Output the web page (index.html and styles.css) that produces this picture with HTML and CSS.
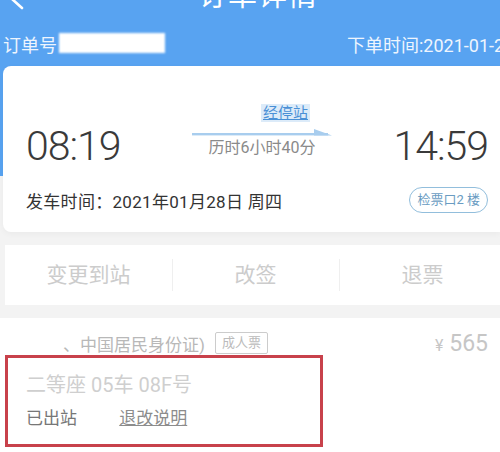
FILE: index.html
```html
<!DOCTYPE html>
<html lang="zh-CN">
<head>
    <meta charset="UTF-8">
    <meta name="viewport" content="width=device-width, initial-scale=1.0">
    <title>订单详情</title>
    <link rel="stylesheet" href="styles.css">
</head>
<body>
    <div class="topbar">
        <svg class="back" width="40" height="22" viewBox="0 0 40 22">
            <path d="M22 8 L12 -1" stroke="#ffffff" stroke-width="2.6" stroke-linecap="round" fill="none"/>
        </svg>
        <h1 class="title">订单详情</h1>
        <span></span>
    </div>
    <div class="order-row">
        <span class="order-no">订单号</span>
        <span class="mask"></span>
        <span class="order-time">下单时间:2021-01-28 07:42</span>
    </div>

    <div class="card trip">
        <div class="times">
            <div class="time">08:19</div>
            <div class="route">
                <a class="stops">经停站</a>
                <svg class="arrow" width="140" height="8" viewBox="0 0 140 8">
                    <rect x="0" y="5" width="136" height="2.4" fill="#a8cdee"/>
                    <polygon points="122,1 140,7.4 122,7.4" fill="#a8cdee"/>
                </svg>
                <div class="duration">历时6小时40分</div>
            </div>
            <div class="time">14:59</div>
        </div>
        <div class="depart">
            <span>发车时间：2021年01月28日 周四</span>
            <span class="gate">检票口2 楼</span>
        </div>
    </div>

    <div class="card actions">
        <div class="action">变更到站</div>
        <div class="action">改签</div>
        <div class="action">退票</div>
    </div>

    <div class="passenger">
        <div class="passenger-row">
            <span class="idtype">、中国居民身份证)</span>
            <span class="kind">成人票</span>
            <span class="price"><small>¥</small> 565</span>
        </div>
        <div class="seat-box">
            <div class="seat">二等座 05车 08F号</div>
            <div class="status">
                <span>已出站</span>
                <a class="rules">退改说明</a>
            </div>
        </div>
    </div>
</body>
</html>
```

FILE: styles.css
```css
body {
    margin: 0;
    font-family: Roboto, "Noto Sans CJK SC", sans-serif;
    background: linear-gradient(to bottom, #58a3f1 0, #58a3f1 176px, #f3f3f3 176px);
    height: 452px;
    overflow: hidden;
}

.topbar {
    display: grid;
    grid-template-columns: 40px 1fr 24px;
    height: 22px;
    overflow: hidden;
}

.back {
    display: block;
}

.title {
    margin: -18px 0 0;
    font-size: 29px;
    line-height: 28px;
    font-weight: 400;
    color: #ffffff;
    text-align: center;
    letter-spacing: 1px;
}

.order-row {
    display: flex;
    align-items: center;
    height: 44px;
    padding-left: 3px;
    color: #eef5fe;
    font-size: 18px;
    white-space: nowrap;
}

.mask {
    width: 106px;
    height: 20px;
    margin-left: 2px;
    margin-top: -2px;
    background: #ffffff;
    filter: blur(1.2px);
}

.order-time {
    margin-left: auto;
    width: 153px;
    overflow: hidden;
}

.card {
    background: #ffffff;
}

.trip {
    margin-left: 3px;
    border-radius: 8px 0 0 8px;
    padding: 38px 12px 19px 23px;
    box-shadow: 0 2px 6px rgba(0, 0, 0, 0.04);
}

.times {
    display: flex;
    justify-content: space-between;
    align-items: flex-start;
}

.time {
    margin-top: 18px;
    font-family: Roboto, sans-serif;
    font-size: 41px;
    font-weight: 300;
    line-height: 48px;
    letter-spacing: -1px;
    color: #3a3a3a;
}

.route {
    display: flex;
    flex-direction: column;
    align-items: center;
    width: 140px;
    margin-left: 10px;
}

.stops {
    align-self: flex-end;
    margin-right: 22px;
    padding: 0 2px;
    font-size: 15px;
    line-height: 18px;
    color: #4a90d6;
    background: #dcebf9;
    text-decoration: underline;
}

.arrow {
    display: block;
    margin-top: 6px;
}

.duration {
    margin-top: 2px;
    font-size: 16px;
    line-height: 20px;
    color: #8a8a8a;
}

.depart {
    display: flex;
    justify-content: space-between;
    align-items: center;
    margin-top: 17px;
    height: 26px;
    font-size: 17px;
    color: #333333;
    letter-spacing: 0.3px;
}

.gate {
    height: 24px;
    line-height: 24px;
    padding: 0 7px;
    border: 1.5px solid #92bedc;
    border-radius: 13px;
    font-size: 13px;
    color: #6a9cc2;
    letter-spacing: 0;
}

.actions {
    display: grid;
    grid-template-columns: 1fr 1fr 1fr;
    height: 60px;
    margin: 13px -6px 0 5px;
}

.action {
    display: flex;
    align-items: center;
    justify-content: center;
    padding-bottom: 5px;
    font-size: 21px;
    color: #cccccc;
}

.action + .action {
    background: linear-gradient(#efefef, #efefef) left center / 1px 32px no-repeat;
}

.passenger {
    margin-top: 13px;
    background: #ffffff;
    height: 134px;
}

.passenger-row {
    display: flex;
    align-items: center;
    height: 24px;
    padding: 13px 12px 0 63px;
    font-size: 17px;
    color: #b8b8b8;
}

.kind {
    margin-left: 10px;
    height: 20px;
    line-height: 20px;
    padding: 0 6px;
    border: 1px solid #cccccc;
    border-radius: 2px;
    font-size: 13px;
    color: #bbbbbb;
}

.price {
    margin-left: auto;
    font-size: 23px;
    color: #c6c6c6;
}

.price small {
    font-size: 16px;
}

.seat-box {
    box-sizing: border-box;
    width: 318px;
    margin-left: 5px;
    padding: 15px 0 15px 18px;
    border: 3px solid #c8414b;
}

.seat {
    font-size: 20px;
    line-height: 24px;
    color: #cfcfcf;
}

.status {
    margin-top: 10px;
    font-size: 17px;
    line-height: 22px;
    color: #777777;
}

.rules {
    margin-left: 38px;
    color: #8c8c8c;
    text-decoration: underline;
}
```
